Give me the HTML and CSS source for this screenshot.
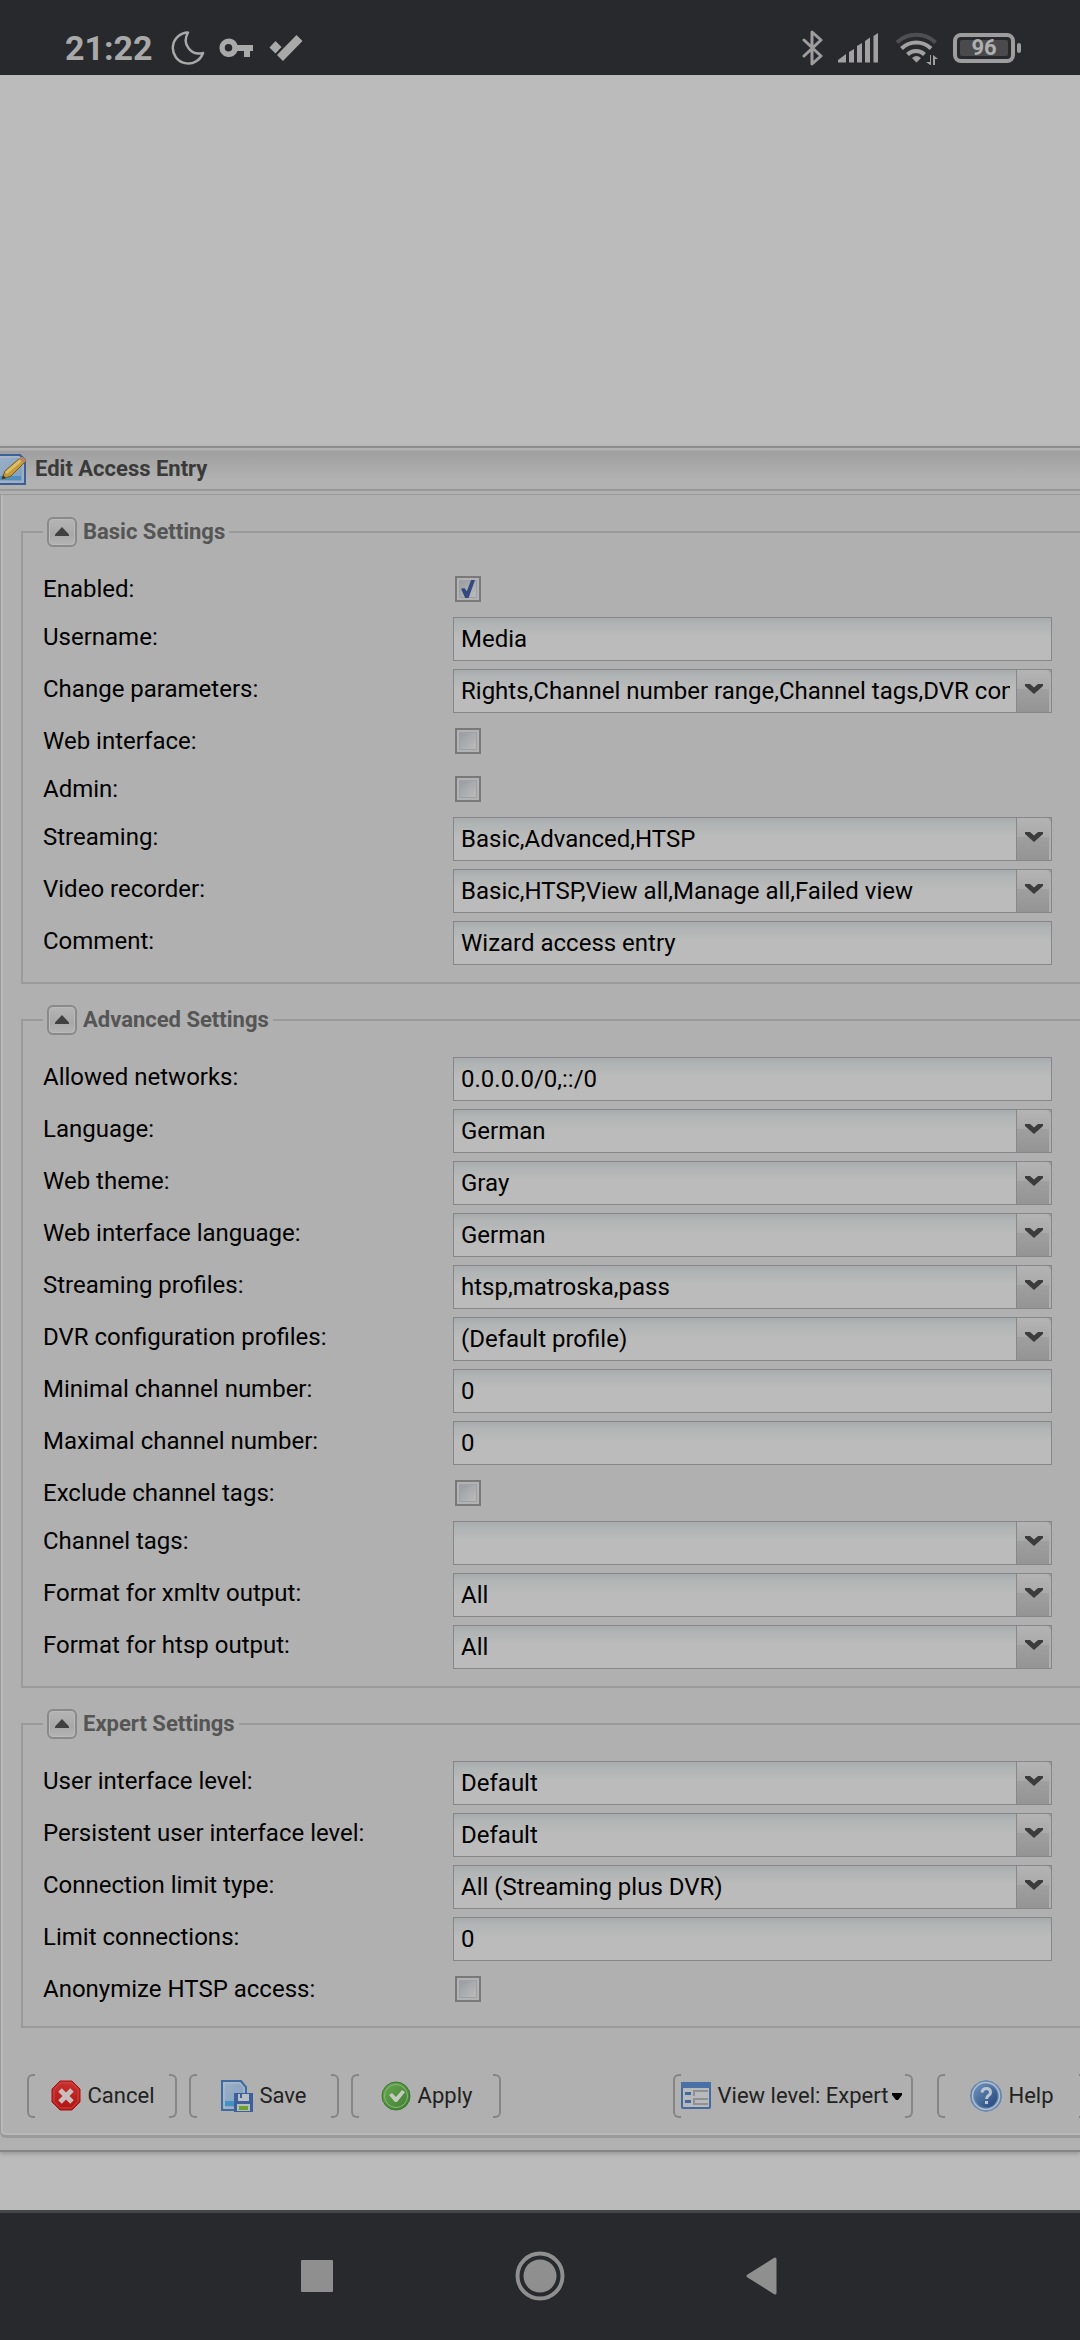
FILE: index.html
```html
<!DOCTYPE html>
<html lang="en">
<head>
<meta charset="utf-8">
<meta name="viewport" content="width=device-width">
<title>Edit Access Entry</title>
<link rel="stylesheet" href="styles.css">
</head>
<body>
<svg class="defs" aria-hidden="true">
  <defs>
    <linearGradient id="gRed" x1="0" y1="0" x2="0" y2="1"><stop offset="0" stop-color="#c8302e"/><stop offset="1" stop-color="#b01412"/></linearGradient>
    <linearGradient id="gGreen" x1="0" y1="0" x2="1" y2="1"><stop offset="0" stop-color="#6aa653"/><stop offset="1" stop-color="#3d7f30"/></linearGradient>
    <linearGradient id="gPage" x1="0" y1="0" x2="1" y2="1"><stop offset="0" stop-color="#9db3c9"/><stop offset="1" stop-color="#7f9cbc"/></linearGradient>
    <linearGradient id="gHelp" x1="0" y1="0" x2="1" y2="1"><stop offset="0" stop-color="#6f93bd"/><stop offset="1" stop-color="#1f4377"/></linearGradient>
  </defs>
  <symbol id="chevron" viewBox="0 0 18 12"><path d="M0 1h5l4 3.500L13 1h5v2L9 11 0 3z" fill="#3c3c3c"/></symbol>
  <symbol id="up" viewBox="0 0 16 10"><path d="M8 0l7 7.500V9H1V7.500z" fill="#404040"/></symbol>
</svg>

<header class="status">
  <time class="clock">21:22</time>
  <svg class="moon" width="34" height="34" viewBox="0 0 34 34"><path d="M17 1.500A15.500 15.500 0 1 0 32 22C21 25 10 14 17 1.500z" fill="none" stroke="#a9a9a9" stroke-width="2.500" stroke-linejoin="round"/></svg>
  <svg class="key" width="34" height="20" viewBox="0 0 34 20"><path fill-rule="evenodd" d="M9.500.500a9.300 9.300 0 0 1 9 6.500H34v6h-3v6h-6v-6h-6.500A9.300 9.300 0 1 1 9.500.500zM9.500 6a3.700 3.700 0 1 0 0 7.500 3.700 3.700 0 0 0 0-7.500z" fill="#a9a9a9"/></svg>
  <svg class="tick" width="34" height="26" viewBox="0 0 34 26"><path d="M6.500 6l6 6-6 6.500-6-6zM27.500 0l6 6L14 26l-6-6z" fill="#a9a9a9"/></svg>
  <svg class="bt" width="22" height="36" viewBox="0 0 22 36"><path d="M2 10l17 16-9 8V2l9 8L2 26" fill="none" stroke="#9d9d9d" stroke-width="3" stroke-linejoin="round" stroke-linecap="round"/></svg>
  <svg class="signal" width="41" height="30" viewBox="0 0 41 30"><path d="M0 29.500V27l8-6v8.500zM11 29.500V19l5-3v13.500zM19 29.500V13l5-3v19.500zM27 29.500V8l5-3.500v25zM35.500 29.500V3L40 0v29.500z" fill="#a1a1a1"/></svg>
  <svg class="wifi" width="44" height="34" viewBox="0 0 44 34"><g fill="none" stroke-width="4"><path d="M2 11.500a28 28 0 0 1 38.500 0" stroke="#4e4f52"/><path d="M6.500 17.500a21 21 0 0 1 29.500 0M12.500 23.500a12 12 0 0 1 17 0" stroke="#a1a1a1"/></g><path d="M17 27q4.500-4 9 0l-4.500 4.500zM35 24v7h-4l5 3.500V24zM38 34V24l5 4h-3v6z" fill="#a1a1a1"/></svg>
  <span class="battery"><span class="level">96</span></span>
</header>

<main class="page">
  <form class="window">
    <h1 class="title">
      <svg width="27" height="34" viewBox="0 0 27 34"><path d="M-6 3H20l5 5V32H-6z" fill="url(#gPage)" stroke="#3c5f96" stroke-width="2"/><path d="M-4 5H19l4 4V30H-4z" fill="none" stroke="#b5bfca"/><path d="M6 24h15v4H0v-4z" fill="#4f8fbd"/><path d="M2 27l3-8L20 6q4-1 6 3L11 24z" fill="#c49b3a" stroke="#7b5a24"/><path d="M5 20L20 7l2 2L7 22z" fill="#dcc068"/><path d="M20 6q3-3 6 3l-3 2-4-4z" fill="#b88765"/><path d="M2 27l1-4 3 3z" fill="#3c3020"/></svg>
      Edit Access Entry
    </h1>
    <div class="panel">
      <fieldset>
        <legend><button type="button" class="fold" aria-label="Collapse"><svg width="16" height="10"><use href="#up"/></svg></button>Basic Settings</legend>
        <div class="row check"><label for="f1">Enabled:</label><input type="checkbox" id="f1" checked></div>
        <div class="row"><label for="f2">Username:</label><input type="text" id="f2" value="Media"></div>
        <div class="row"><label for="f3">Change parameters:</label><div class="combo"><select id="f3"><option>Rights,Channel number range,Channel tags,DVR configurations</option></select><span class="drop"><svg width="18" height="12"><use href="#chevron"/></svg></span></div></div>
        <div class="row check"><label for="f4">Web interface:</label><input type="checkbox" id="f4"></div>
        <div class="row check"><label for="f5">Admin:</label><input type="checkbox" id="f5"></div>
        <div class="row"><label for="f6">Streaming:</label><div class="combo"><select id="f6"><option>Basic,Advanced,HTSP</option></select><span class="drop"><svg width="18" height="12"><use href="#chevron"/></svg></span></div></div>
        <div class="row"><label for="f7">Video recorder:</label><div class="combo"><select id="f7"><option>Basic,HTSP,View all,Manage all,Failed view</option></select><span class="drop"><svg width="18" height="12"><use href="#chevron"/></svg></span></div></div>
        <div class="row"><label for="f8">Comment:</label><input type="text" id="f8" value="Wizard access entry"></div>
      </fieldset>

      <fieldset>
        <legend><button type="button" class="fold" aria-label="Collapse"><svg width="16" height="10"><use href="#up"/></svg></button>Advanced Settings</legend>
        <div class="row"><label for="g1">Allowed networks:</label><input type="text" id="g1" value="0.0.0.0/0,::/0"></div>
        <div class="row"><label for="g2">Language:</label><div class="combo"><select id="g2"><option>German</option></select><span class="drop"><svg width="18" height="12"><use href="#chevron"/></svg></span></div></div>
        <div class="row"><label for="g3">Web theme:</label><div class="combo"><select id="g3"><option>Gray</option></select><span class="drop"><svg width="18" height="12"><use href="#chevron"/></svg></span></div></div>
        <div class="row"><label for="g4">Web interface language:</label><div class="combo"><select id="g4"><option>German</option></select><span class="drop"><svg width="18" height="12"><use href="#chevron"/></svg></span></div></div>
        <div class="row"><label for="g5">Streaming profiles:</label><div class="combo"><select id="g5"><option>htsp,matroska,pass</option></select><span class="drop"><svg width="18" height="12"><use href="#chevron"/></svg></span></div></div>
        <div class="row"><label for="g6">DVR configuration profiles:</label><div class="combo"><select id="g6"><option>(Default profile)</option></select><span class="drop"><svg width="18" height="12"><use href="#chevron"/></svg></span></div></div>
        <div class="row"><label for="g7">Minimal channel number:</label><input type="text" id="g7" value="0"></div>
        <div class="row"><label for="g8">Maximal channel number:</label><input type="text" id="g8" value="0"></div>
        <div class="row check"><label for="g9">Exclude channel tags:</label><input type="checkbox" id="g9"></div>
        <div class="row"><label for="g10">Channel tags:</label><div class="combo"><select id="g10"><option></option></select><span class="drop"><svg width="18" height="12"><use href="#chevron"/></svg></span></div></div>
        <div class="row"><label for="g11">Format for xmltv output:</label><div class="combo"><select id="g11"><option>All</option></select><span class="drop"><svg width="18" height="12"><use href="#chevron"/></svg></span></div></div>
        <div class="row"><label for="g12">Format for htsp output:</label><div class="combo"><select id="g12"><option>All</option></select><span class="drop"><svg width="18" height="12"><use href="#chevron"/></svg></span></div></div>
      </fieldset>

      <fieldset>
        <legend><button type="button" class="fold" aria-label="Collapse"><svg width="16" height="10"><use href="#up"/></svg></button>Expert Settings</legend>
        <div class="row"><label for="h1">User interface level:</label><div class="combo"><select id="h1"><option>Default</option></select><span class="drop"><svg width="18" height="12"><use href="#chevron"/></svg></span></div></div>
        <div class="row"><label for="h2">Persistent user interface level:</label><div class="combo"><select id="h2"><option>Default</option></select><span class="drop"><svg width="18" height="12"><use href="#chevron"/></svg></span></div></div>
        <div class="row"><label for="h3">Connection limit type:</label><div class="combo"><select id="h3"><option>All (Streaming plus DVR)</option></select><span class="drop"><svg width="18" height="12"><use href="#chevron"/></svg></span></div></div>
        <div class="row"><label for="h4">Limit connections:</label><input type="text" id="h4" value="0"></div>
        <div class="row check"><label for="h5">Anonymize HTSP access:</label><input type="checkbox" id="h5"></div>
      </fieldset>

      <div class="toolbar">
        <button type="button" class="tool"><svg width="32" height="32" viewBox="0 0 32 32"><path d="M10 1h12l8 8v13l-8 8H10l-8-8V9z" fill="url(#gRed)" stroke="#a81210"/><path d="M10.500 3h11L28 9.500v12L21.500 28h-11L4 21.500v-12z" fill="none" stroke="#cc4b49"/><path d="M10 10l12 12M22 10L10 22" stroke="#c9bebe" stroke-width="5"/></svg>Cancel</button>
        <button type="button" class="tool"><svg width="32" height="32" viewBox="0 0 32 32"><path d="M1 1h19l5 6v23H1z" fill="url(#gPage)" stroke="#3f6ba1" stroke-width="2"/><path d="M3 3h16l4 5v20H3z" fill="none" stroke="#b1bfce"/><path d="M4 21h9v5H4z" fill="#4293c4"/><path d="M13 13h19v19H13z" fill="#3d5f9b"/><path d="M17 14h11v7H17z" fill="#b9bfc6"/><path d="M19 14h2v4h-2z" fill="#3d5f9b"/><path d="M16 24h13v7H16z" fill="#b5bdb5"/><path d="M18 26h9v4h-9z" fill="#6da032"/></svg>Save</button>
        <button type="button" class="tool"><svg width="32" height="32" viewBox="0 0 32 32"><circle cx="16" cy="16" r="14" fill="url(#gGreen)" stroke="#39782f"/><circle cx="16" cy="16" r="11.500" fill="none" stroke="#8bb77b"/><path d="M9 15l3-2 4 4 6-7 3 2-8 10h-2z" fill="#c3cbc0"/></svg>Apply</button>
        <button type="button" class="tool level-menu"><svg width="32" height="32" viewBox="0 0 32 32"><rect x="2" y="3" width="28" height="25" rx="1" fill="#b7b9bc" stroke="#456a9d" stroke-width="2"/><path d="M1 2h30v6H1z" fill="#4a71a5"/><path d="M5 12h6v3H5zM5 20h6v3H5z" fill="#44689c"/><path d="M14 16v-5h14M14 23v-4h14M13 24h15" fill="none" stroke="#8f9092" stroke-width="2"/></svg>View level: Expert<svg class="caret" width="10" height="7" viewBox="0 0 10 7"><path d="M0 0h10v2L6 7H4L0 2z"/></svg></button>
        <button type="button" class="tool help"><svg width="32" height="32" viewBox="0 0 32 32"><path d="M16 0l6 1.500L27.500 5 31 10l1 6-1 6-3.500 5-5.500 3.500-6 1.500-6-1.500L4.500 27 1 22l-1-6 1-6 3.500-5L10 1.500z" fill="#6586b0"/><circle cx="16" cy="16" r="13.500" fill="none" stroke="#b2bfce" stroke-width="1.500"/><circle cx="16" cy="16" r="11.500" fill="url(#gHelp)"/><path d="M12 12.500q.500-4 4.500-4t4 4c0 3-4 2.500-4 6.500" fill="none" stroke="#bcc6d2" stroke-width="3"/><path d="M15 21h3v3h-3z" fill="#bcc6d2"/></svg>Help</button>
      </div>
    </div>
  </form>
</main>

<nav class="nav">
  <button type="button" aria-label="Recent apps"><svg width="50" height="50" viewBox="0 0 50 50"><rect x="9" y="9" width="32" height="32" rx="1" fill="#8f8f8f"/></svg></button>
  <button type="button" aria-label="Home"><svg width="50" height="50" viewBox="0 0 50 50"><circle cx="25" cy="25" r="22.500" fill="none" stroke="#8f8f8f" stroke-width="4"/><circle cx="25" cy="25" r="16.500" fill="#8f8f8f"/></svg></button>
  <button type="button" aria-label="Back"><svg width="50" height="50" viewBox="0 0 50 50"><path d="M10 25L37 8v34z" fill="#8f8f8f" stroke="#8f8f8f" stroke-width="3" stroke-linejoin="round"/></svg></button>
</nav>
</body>
</html>
```
FILE: styles.css
```css
* { box-sizing: border-box; }

body {
  margin: 0;
  min-height: 100vh;
  display: flex;
  flex-direction: column;
  overflow-x: hidden;
  background: #bbb;
  color: #000;
  font: 24px/28px Roboto, sans-serif;
}

button, input, select { font: inherit; color: inherit; margin: 0; }
svg { display: block; flex: none; overflow: hidden; }
.defs { position: absolute; width: 0; height: 0; }

/* Phone status bar */
.status {
  height: 75px;
  padding: 20px 65px 0 65px;
  display: flex;
  align-items: center;
  background: #28292d;
}
.clock { color: #a9a9a9; font-size: 34px; font-weight: 700; line-height: 40px; }
.moon { margin-left: 18px; }
.key { margin-left: 14px; }
.tick { margin-left: 16px; }
.bt { margin-left: auto; }
.signal { margin-left: 14px; }
.wifi { margin-left: 16px; }
.battery {
  width: 62px;
  height: 30px;
  margin-left: 14px;
  padding: 3px;
  border: 4px solid #9d9d9d;
  border-radius: 8px;
  position: relative;
}
.battery::after {
  content: "";
  position: absolute;
  right: -10px;
  top: 6px;
  width: 4px;
  height: 10px;
  border-radius: 2px;
  background: #9d9d9d;
}
.level {
  display: flex;
  align-items: center;
  justify-content: center;
  height: 16px;
  border-radius: 2px;
  background: #4a4a4c;
  color: #b0b0b0;
  font-size: 22px;
  font-weight: 700;
}

/* Dialog */
.page { flex: 1; padding-top: 371px; }
.window {
  border-top: 2px solid #8c8c8c;
  border-bottom: 2px solid #868686;
  padding-bottom: 12px;
  background: #b1b1b1;
  box-shadow: 0 2px 4px #999;
}
.title {
  display: flex;
  align-items: center;
  gap: 8px;
  height: 43px;
  margin: 0 0 3px;
  border-bottom: 2px solid #999;
  background: linear-gradient(#b3b3b3 0 2px, #9f9f9f 3px, #b2b2b2 32px);
  color: #3a3a3a;
  font-size: 22px;
  font-weight: 700;
}
.panel {
  padding: 22px 0 17px 18px;
  border: solid #9a9a9a;
  border-width: 1px 0 3px 1px;
  border-bottom-left-radius: 6px;
  background: #b0b0b0;
  box-shadow: inset 2px -2px 0 #b8b8b8;
}

fieldset {
  min-width: 0;
  margin: 0 0 21px 2px;
  padding: 22px 28px 9px 20px;
  border: 2px solid #9a9a9a;
  border-right: 0;
}
legend {
  display: flex;
  align-items: center;
  gap: 6px;
  height: 30px;
  padding: 0 4px;
  color: #555;
  font-size: 22px;
  font-weight: 700;
}
.fold {
  display: grid;
  place-items: center;
  width: 30px;
  height: 30px;
  padding: 0;
  border: 2px solid #8a8a8a;
  border-radius: 6px;
  background: linear-gradient(#b5b5b5, #a8a8a8 60%, #b4b4b4);
  box-shadow: inset 0 0 0 1px #bababa;
}

.row { display: flex; height: 52px; }
.row label { flex: 0 0 410px; padding-top: 6px; }

/* A tick box stands a little lower and takes less room than a text box */
.row.check { height: 48px; }

input[type="text"], select {
  flex: 1;
  min-width: 0;
  height: 44px;
  padding: 0 7px;
  border: 1px solid #86878a;
  border-radius: 0;
  background: linear-gradient(#a8abab, #b1b4b4 6px, #bbb 20px);
}
.combo { flex: 1; min-width: 0; display: grid; grid-template-columns: minmax(0, 1fr) 36px; height: 44px; }
select { grid-area: 1 / 1 / 2 / 3; width: 100%; padding-right: 41px; appearance: none; }
.drop {
  grid-area: 1 / 2;
  display: grid;
  place-items: center;
  padding-bottom: 4px;
  border: 1px solid #86878a;
  border-top-right-radius: 5px;
  background: linear-gradient(#b4b4b4, #a9a9a9 45%, #9f9f9f 46%, #949494);
  box-shadow: inset -2px 0 0 #b0b0b0;
  pointer-events: none;
}

input[type="checkbox"] {
  appearance: none;
  display: grid;
  place-items: center;
  width: 26px;
  height: 26px;
  margin: 7px 0 0 2px;
  border: 2px solid #797979;
  background: linear-gradient(135deg, #94979d, #b8b8b8 80%);
  box-shadow: inset 0 0 0 2px #b3b3b3, inset 0 0 0 3px #9da0a6;
}
input[type="checkbox"]:checked::before {
  content: "";
  width: 14px;
  height: 18px;
  background: #34497f;
  clip-path: polygon(0 48%, 24% 44%, 42% 62%, 72% 0, 100% 0, 54% 100%, 30% 100%);
}

/* Dialog buttons */
.toolbar { display: flex; gap: 12px; margin: 46px -7px 0 8px; }
.tool {
  display: flex;
  align-items: center;
  justify-content: center;
  gap: 6px;
  width: 150px;
  height: 44px;
  padding: 0;
  border: 0;
  background: none;
  position: relative;
  color: #222;
  font-size: 22px;
  white-space: nowrap;
}
.tool::before, .tool::after {
  content: "";
  position: absolute;
  top: 0;
  bottom: 0;
  width: 6px;
  border: 2px solid #858585;
}
.tool::before { left: 0; border-right: 0; border-radius: 6px 0 0 6px; }
.tool::after { right: 0; border-left: 0; border-radius: 0 6px 6px 0; }
.level-menu { width: 240px; margin-left: auto; padding-right: 4px; }
.help { margin-left: 12px; }
.caret { margin-left: -2px; }

/* Phone navigation bar */
.nav {
  display: flex;
  justify-content: center;
  gap: 173px;
  padding: 38px 0 39px;
  border-top: 3px solid #45484b;
  background: #28292d;
}
.nav button { padding: 0; border: 0; background: none; }
.nav svg { height: 50px; }
```
